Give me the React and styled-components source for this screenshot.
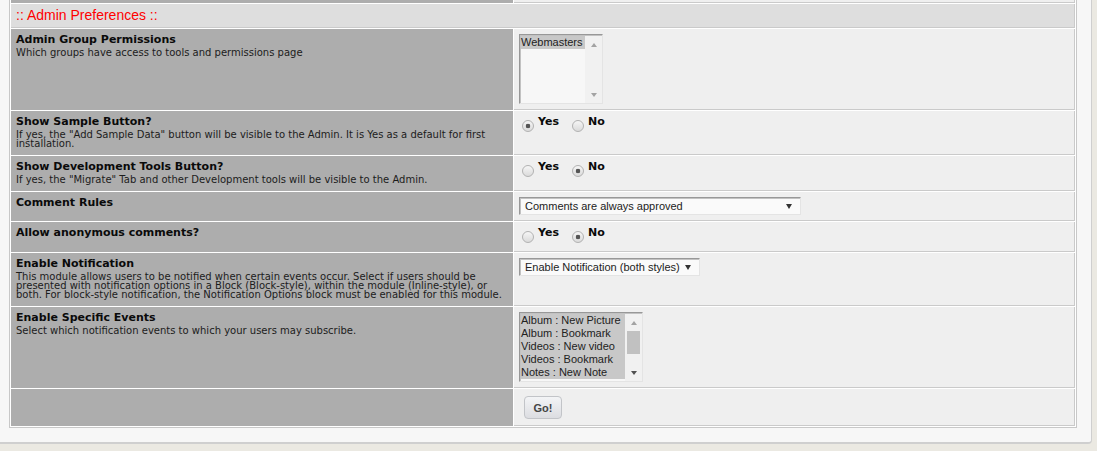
import React from 'react';
import styled, { createGlobalStyle } from 'styled-components';

const GlobalStyle = createGlobalStyle`
  html, body {
    margin: 0;
    padding: 0;
    background: #ebe9e2;
  }
  body {
    font-family: "DejaVu Sans", Verdana, sans-serif;
  }
`;

const Panel = styled.div`
  width: 1068px;
  padding: 0 14px 14px 9px;
  background: #f7f7f7;
  border-right: 1px solid #cfcfcf;
  border-bottom: 2px solid #cfcfcf;
  border-bottom-right-radius: 4px;
`;

const TableFrame = styled.div`
  border: 1px solid #c8c8c8;
  border-top: none;
`;

const Table = styled.div`
  display: flex;
  flex-direction: column;
  gap: 1px;
  background: #fff;
  border: 1px solid #fff;
  border-top: none;
`;

const Row = styled.div`
  display: grid;
  grid-template-columns: 502px 561px;
  column-gap: 1px;
  min-height: ${(props) => props.$h}px;
`;

const LabelCell = styled.div`
  background: #adadad;
  padding: ${(props) => props.$pad || '4px 5px'};
  box-sizing: border-box;
`;

const FieldCell = styled.div`
  background: #efefef;
  border-right: 1px solid #cacaca;
  border-bottom: 1px solid #cacaca;
  padding: ${(props) => props.$pad || '5px 5px'};
  box-sizing: border-box;
`;

const Header = styled.div`
  height: 24px;
  box-sizing: border-box;
  background: #dedede;
  border-right: 1px solid #cacaca;
  border-bottom: 1px solid #cacaca;
  padding-left: 5px;
  font-family: "Liberation Sans", Arial, sans-serif;
  font-size: 14px;
  line-height: 23px;
  color: #f00;
`;

const Title = styled.div`
  font-size: 11px;
  font-weight: bold;
  line-height: 14px;
  color: #0a0a0a;
`;

const Desc = styled.div`
  margin-top: 1px;
  font-size: 10px;
  line-height: 9px;
  color: #1c1c1c;
`;

const RadioGroup = styled.div`
  display: flex;
  align-items: flex-start;
`;

const RadioOption = styled.label`
  display: flex;
  align-items: flex-start;
  margin-right: 10px;
  font-size: 11px;
  font-weight: bold;
  line-height: 13px;
  color: #0a0a0a;
`;

const Radio = styled.input.attrs({ type: 'radio' })`
  appearance: none;
  width: 12px;
  height: 12px;
  margin: 5px 4px 0 3px;
  box-sizing: border-box;
  border: 1px solid #b2b2b2;
  border-radius: 50%;
  background: linear-gradient(#f6f6f6, #dadada);

  &:checked {
    background: radial-gradient(circle, #555 0 2px, transparent 2.6px),
      linear-gradient(#f6f6f6, #dadada);
  }
`;

const Dropdown = styled.div`
  display: flex;
  align-items: center;
  width: ${(props) => props.$w}px;
  height: 18px;
  box-sizing: border-box;
  padding: 0 8px 0 5px;
  border: 1px solid;
  border-color: #989898 #e4e4e4 #e4e4e4 #989898;
  box-shadow: inset 1px 1px #c2c2c2;
  background: #fafafa;
  font-family: "Liberation Sans", Arial, sans-serif;
  font-size: 11px;
  color: #222;
`;

const Caret = styled.span`
  margin-left: auto;
  width: 0;
  height: 0;
  border-left: 3px solid transparent;
  border-right: 3px solid transparent;
  border-top: 5px solid #333;
`;

const ListBox = styled.div`
  display: flex;
  width: ${(props) => props.$w}px;
  height: ${(props) => props.$h}px;
  box-sizing: border-box;
  border: 1px solid;
  border-color: #989898 #e4e4e4 #e4e4e4 #989898;
  box-shadow: inset 1px 1px #c2c2c2;
  padding: 1px 0 0 1px;
  background: #f7f7f7;
  font-family: "Liberation Sans", Arial, sans-serif;
  font-size: 11px;
  color: #222;
`;

const Options = styled.div`
  flex: 1;
  display: flex;
  flex-direction: column;
`;

const Option = styled.div`
  height: 13px;
  line-height: 13px;
  white-space: nowrap;
  background: ${(props) => (props.$selected ? '#c8c8c8' : 'transparent')};
`;

const ScrollBar = styled.div`
  width: 17px;
  display: flex;
  flex-direction: column;
  background: #f1f1f1;
`;

const ScrollButton = styled.div`
  height: 17px;
  display: flex;
  align-items: center;
  justify-content: center;

  &::after {
    content: '';
    width: 0;
    height: 0;
    border-left: 3.5px solid transparent;
    border-right: 3.5px solid transparent;
    ${(props) => (props.$dir === 'up' ? 'border-bottom' : 'border-top')}: 4px solid
      ${(props) => (props.$active ? '#505050' : '#a3a3a3')};
  }
`;

const Track = styled.div`
  flex: 1;
  display: flex;
  flex-direction: column;
  align-items: center;
`;

const Thumb = styled.div`
  width: 13px;
  height: 23px;
  background: #c1c1c1;
`;

const GoButton = styled.button`
  width: 38px;
  height: 23px;
  margin: 2px 0 0 5px;
  padding: 0;
  border: 1px solid #c2c4c8;
  border-radius: 4px;
  background: linear-gradient(#f3f4f6, #dcdde1);
  font-family: "Liberation Sans", Arial, sans-serif;
  font-size: 11px;
  font-weight: bold;
  color: #454545;
`;

const events = [
  'Album : New Picture',
  'Album : Bookmark',
  'Videos : New video',
  'Videos : Bookmark',
  'Notes : New Note',
];

function SettingRow({ h, title, desc, pad, children }) {
  return (
    <Row $h={h}>
      <LabelCell $pad={pad === '0' ? '0' : undefined}>
        {title && <Title>{title}</Title>}
        {desc && <Desc>{desc}</Desc>}
      </LabelCell>
      <FieldCell $pad={pad}>{children}</FieldCell>
    </Row>
  );
}

function YesNo({ name, value }) {
  return (
    <RadioGroup>
      <RadioOption>
        <Radio name={name} defaultChecked={value === 'yes'} />
        Yes
      </RadioOption>
      <RadioOption>
        <Radio name={name} defaultChecked={value === 'no'} />
        No
      </RadioOption>
    </RadioGroup>
  );
}

function Scroll({ thumb, downActive }) {
  return (
    <ScrollBar>
      <ScrollButton $dir="up" />
      <Track>{thumb && <Thumb />}</Track>
      <ScrollButton $dir="down" $active={downActive} />
    </ScrollBar>
  );
}

export default function App() {
  return (
    <>
      <GlobalStyle />
      <Panel>
        <TableFrame>
          <Table>
            <SettingRow h={3} pad="0" />
            <Header>:: Admin Preferences ::</Header>
            <SettingRow
              h={81}
              title="Admin Group Permissions"
              desc="Which groups have access to tools and permissions page"
            >
              <ListBox $w={84} $h={70}>
                <Options>
                  <Option $selected>Webmasters</Option>
                </Options>
                <Scroll />
              </ListBox>
            </SettingRow>
            <SettingRow
              h={44}
              pad="4px 5px"
              title="Show Sample Button?"
              desc={'If yes, the "Add Sample Data" button will be visible to the Admin. It is Yes as a default for first installation.'}
            >
              <YesNo name="sample" value="yes" />
            </SettingRow>
            <SettingRow
              h={35}
              pad="4px 5px"
              title="Show Development Tools Button?"
              desc={'If yes, the "Migrate" Tab and other Development tools will be visible to the Admin.'}
            >
              <YesNo name="devtools" value="no" />
            </SettingRow>
            <SettingRow h={29} title="Comment Rules">
              <Dropdown $w={282}>
                Comments are always approved
                <Caret />
              </Dropdown>
            </SettingRow>
            <SettingRow h={30} pad="4px 5px" title="Allow anonymous comments?">
              <YesNo name="anon" value="no" />
            </SettingRow>
            <SettingRow
              h={53}
              title="Enable Notification"
              desc="This module allows users to be notified when certain events occur. Select if users should be presented with notification options in a Block (Block-style), within the module (Inline-style), or both. For block-style notification, the Notification Options block must be enabled for this module."
            >
              <Dropdown $w={181}>
                Enable Notification (both styles)
                <Caret />
              </Dropdown>
            </SettingRow>
            <SettingRow
              h={81}
              title="Enable Specific Events"
              desc="Select which notification events to which your users may subscribe."
            >
              <ListBox $w={124} $h={70}>
                <Options>
                  {events.map((ev) => (
                    <Option key={ev} $selected>
                      {ev}
                    </Option>
                  ))}
                </Options>
                <Scroll thumb downActive />
              </ListBox>
            </SettingRow>
            <SettingRow h={37}>
              <GoButton>Go!</GoButton>
            </SettingRow>
          </Table>
        </TableFrame>
      </Panel>
    </>
  );
}
